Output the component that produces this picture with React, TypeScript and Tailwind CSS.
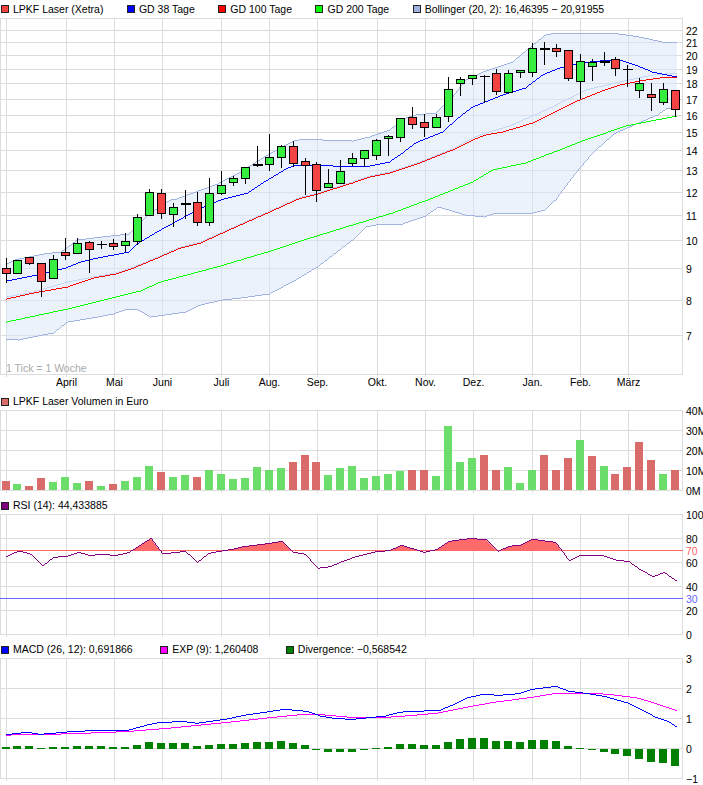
const GRID_X = [6, 66, 114, 162, 221, 269, 317, 377, 425, 473, 532, 580, 628];
const GRID = "#dcdcdc";
const RIGHT = 682.5;
const FONT = 10.5;

const xAt = (i: number) => Math.floor(6 + i * 11.96) + 0.5;

// wick top, body top, body bottom, wick bottom, kind (r/g body, d thin doji, t thick doji)
const candles: [number, number, number, number, string][] = [
  [258, 268, 273, 283, "r"], [260, 260, 273, 273, "g"], [257, 257, 263, 265, "r"], [263, 263, 281, 297, "r"],
  [255, 259, 278, 278, "g"], [238, 252, 255, 260, "r"], [238, 243, 253, 253, "g"], [241, 242, 249, 273, "r"],
  [241, 244, 244, 249, "d"], [239, 243, 246, 250, "r"], [233, 241, 245, 252, "g"], [214, 217, 241, 245, "g"],
  [189, 192, 215, 215, "g"], [189, 193, 213, 219, "r"], [203, 207, 214, 227, "g"], [190, 203, 203, 219, "t"],
  [192, 202, 222, 226, "r"], [178, 193, 222, 226, "g"], [171, 185, 193, 195, "g"], [176, 178, 182, 186, "g"],
  [167, 167, 178, 184, "g"], [146, 164, 164, 167, "t"], [134, 157, 164, 171, "g"], [145, 146, 157, 168, "g"],
  [141, 146, 163, 167, "r"], [158, 161, 165, 195, "r"], [162, 164, 190, 202, "r"], [169, 183, 187, 187, "g"],
  [160, 171, 183, 183, "g"], [153, 158, 163, 166, "g"], [150, 150, 158, 167, "g"], [139, 140, 155, 160, "g"],
  [135, 136, 138, 156, "g"], [118, 118, 137, 142, "g"], [107, 117, 124, 129, "r"], [114, 122, 127, 137, "r"],
  [114, 117, 127, 127, "g"], [77, 89, 116, 122, "g"], [77, 79, 83, 96, "g"], [75, 75, 78, 85, "g"],
  [75, 76, 76, 103, "d"], [69, 73, 91, 95, "r"], [70, 73, 92, 92, "g"], [70, 70, 72, 78, "g"],
  [43, 48, 72, 77, "g"], [42, 48, 48, 65, "t"], [44, 48, 51, 57, "r"], [50, 50, 78, 81, "r"],
  [54, 61, 81, 99, "g"], [59, 62, 66, 81, "g"], [52, 61, 61, 66, "t"], [57, 59, 68, 76, "r"],
  [65, 69, 69, 87, "d"], [78, 83, 90, 98, "g"], [83, 94, 97, 111, "r"], [83, 89, 102, 105, "g"],
  [90, 90, 109, 117, "r"],
];

const upper = "6,264 14,260 43,254 60,252 66,248 77,240 110,236 128,234 133,230 147,215 170,200 176,199 217,184 240,172 267,155 293,141 303,139 323,140 352,141 369,137 389,130 405,118 415,115 435,113 452,97 465,80 485,71 512,62 529,48 545,35 555,33 575,33 612,33 639,37 662,42 677,43";
const lower = "6,339 18,340 37,336 53,333 67,322 97,317 113,314 127,309 138,310 150,317 185,312 200,305 222,300 240,298 269,294 295,280 317,267 352,240 365,227 375,225 402,224 425,216 438,207 465,215 484,217 495,213 532,213 544,210 555,200 572,177 592,153 615,133 629,127 645,120 657,115 667,108 677,108";
const middle = "6,297 33,292 67,282 93,277 115,273 133,267 157,257 180,247 200,242 233,227 267,212 298,198 317,193 352,182 369,176 389,172 419,162 452,149 472,138 485,133 509,126 552,107 585,90 619,82 652,75 677,73";
const gd38 = "6,281 37,275 65,268 80,262 92,259 113,255 128,252 138,243 160,230 182,218 207,205 223,199 247,193 267,180 287,168 297,165 333,166 369,166 389,162 402,153 415,143 442,132 459,117 472,107 502,95 525,88 542,75 559,68 579,63 599,61 619,60 635,65 652,72 677,77";
const gd100 = "6,299 33,293 67,287 93,278 115,274 133,268 157,258 180,248 200,243 233,228 267,213 298,199 317,194 352,183 369,177 389,173 419,163 452,150 472,140 485,135 502,132 519,127 532,123 552,113 579,100 599,92 619,85 639,81 659,78 677,77";
const gd200 = "6,322 67,309 115,297 140,291 160,282 220,266 267,252 297,242 352,225 392,213 427,200 472,182 492,170 525,163 559,150 579,142 605,133 625,126 645,122 677,116";

const priceTicks: [string, number][] = [
  ["22", 30], ["21", 42], ["20", 55], ["19", 69], ["18", 83], ["17", 99], ["16", 115], ["15", 132],
  ["14", 150], ["13", 170], ["12", 192], ["11", 215], ["10", 240], ["9", 268], ["8", 300], ["7", 335],
];
const months: [string, number][] = [
  ["April", 66], ["Mai", 114], ["Juni", 162], ["Juli", 221], ["Aug.", 269], ["Sep.", 317], ["Okt.", 377],
  ["Nov.", 425], ["Dez.", 473], ["Jan.", 532], ["Feb.", 580], ["März", 628],
];

// volume bar tops, read off at 3x (baseline 285), negative = red
const volume = [
  -258, 267, -273, -249, 261, 246, 264, -258, 273, -267, 258, 246, 213, -231, 246, 240, -246, 225, 237, 252,
  249, 216, 225, 219, -201, -180, -201, 240, 219, 213, 249, 243, 237, 228, -225, -225, 243, 93, 201, 189,
  -180, -225, 216, 264, 225, -180, -225, -189, 135, -183, 213, -237, -216, -141, -195, 237, -225,
];

const divergence = [
  321, 318, 318, 324, 321, 321, 318, 318, 318, 321, 321, 315, 306, 309, 309, 309, 318, 315, 312, 312,
  309, 306, 306, 303, 309, 315, 330, 336, 336, 336, 330, 324, 321, 312, 312, 315, 315, 306, 297, 294,
  294, 303, 303, 306, 300, 300, 303, 318, 324, 330, 336, 342, 348, 357, 366, 369, 378,
];

const fromZoom = (pts: number[], x0: number, y0: number) => {
  const out: string[] = [];
  for (let i = 0; i < pts.length; i += 2) out.push(`${x0 + pts[i] / 3},${y0 + pts[i + 1] / 3}`);
  return out.join(" ");
};

const rsi =
  fromZoom([18, 170, 55, 153, 90, 162, 127, 198, 160, 172, 200, 169, 235, 157, 270, 167, 305, 162, 345, 167, 385, 158, 452, 115, 487, 162, 555, 154, 592, 187, 625, 160, 665, 153, 700, 147, 730, 140, 808, 130, 845, 124, 880, 157, 915, 163, 952, 205, 990, 200, 1030, 183, 1056, 175], 0, 500) +
  " " +
  fromZoom([0, 173, 70, 155, 110, 152, 148, 136, 215, 157, 255, 148, 290, 124, 350, 116, 400, 118, 437, 154, 470, 139, 505, 135, 540, 118, 610, 127, 650, 182, 685, 166, 750, 166, 790, 180, 830, 185, 865, 210, 903, 230, 935, 217, 975, 245], 352, 500);

const macd =
  fromZoom([18, 284, 80, 277, 120, 283, 200, 276, 290, 271, 385, 270, 440, 255, 470, 249, 545, 244, 590, 250, 680, 237, 730, 226, 800, 216, 850, 208, 920, 214, 960, 228, 1000, 235, 1050, 238], 0, 640) +
  " " +
  fromZoom([0, 238, 60, 232, 100, 228, 140, 217, 170, 214, 260, 212, 300, 195, 340, 175, 390, 163, 440, 166, 500, 161, 540, 148, 610, 139, 650, 154, 700, 160, 760, 170, 830, 190, 880, 215, 910, 232, 945, 243, 975, 262], 352, 640);

const exp =
  fromZoom([18, 286, 60, 283, 180, 282, 330, 277, 400, 273, 500, 265, 600, 255, 700, 245, 800, 234, 900, 224, 950, 223, 1050, 232], 0, 640) +
  " " +
  fromZoom([0, 232, 100, 232, 170, 227, 250, 220, 340, 202, 430, 186, 540, 172, 610, 160, 700, 159, 770, 163, 850, 173, 900, 187, 975, 212], 352, 640);

// the original chart draws aliased 1px lines, so walk column by column and fill whole pixels
function pixelPath(points: string) {
  const pts = points.split(" ").map((p) => p.split(",").map(Number));
  let d = "";
  let prev: number | null = null;
  for (let s = 0; s < pts.length - 1; s++) {
    const [x0, y0] = pts[s];
    const [x1, y1] = pts[s + 1];
    for (let x = Math.ceil(x0); x < x1; x++) {
      const y = Math.floor(y0 + ((x - x0) / (x1 - x0)) * (y1 - y0));
      let top = y;
      let bottom = y;
      if (prev !== null && y < prev - 1) bottom = prev - 1;
      if (prev !== null && y > prev + 1) top = prev + 1;
      d += `M${x} ${top}h1v${bottom - top + 1}h-1z`;
      prev = y;
    }
  }
  return d;
}

function Legend({ items, className }: { items: { color: string; label: string }[]; className: string }) {
  return (
    <div className={`flex items-center pl-[1px] text-[10.5px] leading-none text-black ${className}`}>
      {items.map((item) => (
        <div key={item.label} className="flex items-center gap-[4px] whitespace-nowrap">
          <span className="h-[8px] w-[8px] border border-[#222222]" style={{ backgroundColor: item.color }} />
          <span>{item.label}</span>
        </div>
      ))}
    </div>
  );
}

function Grid({ top, bottom, rows }: { top: number; bottom: number; rows: number[] }) {
  return (
    <g stroke={GRID} strokeWidth={1} shapeRendering="crispEdges">
      <line x1={0.5} x2={0.5} y1={top} y2={bottom} />
      <line x1={RIGHT} x2={RIGHT} y1={top} y2={bottom} />
      <line x1={0} x2={RIGHT} y1={top} y2={top} />
      <line x1={0} x2={RIGHT} y1={bottom} y2={bottom} />
      {rows.map((y) => (
        <line key={y} x1={0} x2={RIGHT} y1={y + 0.5} y2={y + 0.5} />
      ))}
      {GRID_X.map((x) => (
        <line key={x} x1={x + 0.5} x2={x + 0.5} y1={top} y2={bottom + 2} />
      ))}
    </g>
  );
}

function Ticks({ ticks }: { ticks: [string, number][] }) {
  return (
    <g fontSize={FONT} fill="#000000">
      {ticks.map(([label, y]) => (
        <text key={label} x={686} y={y + 5}>
          {label}
        </text>
      ))}
    </g>
  );
}

function Line({ points, color }: { points: string; color: string }) {
  return <path d={pixelPath(points)} fill={color} shapeRendering="crispEdges" />;
}

function Candle({ index }: { index: number }) {
  const [hi, top, bottom, lo, kind] = candles[index];
  const x = xAt(index);
  const doji = kind === "d" || kind === "t";
  return (
    <g shapeRendering="crispEdges">
      <line x1={x} x2={x} y1={hi} y2={lo} stroke="#000000" />
      {doji ? (
        <rect x={x - 5} y={top} width={10} height={kind === "t" ? 2 : 1} fill="#000000" />
      ) : (
        <rect
          x={x - 4}
          y={top + 0.5}
          width={8}
          height={bottom - top}
          fill={kind === "r" ? "#f24242" : "#36ee40"}
          stroke="#000000"
        />
      )}
    </g>
  );
}

function PriceChart() {
  return (
    <svg width={703} height={375} viewBox="0 18 703 375" className="block overflow-visible">
      <Grid top={18.5} bottom={374.5} rows={priceTicks.map(([, y]) => y)} />
      <polygon
        points={`${upper} ${lower.split(" ").reverse().join(" ")}`}
        fill="#d9e6f9"
        fillOpacity={0.5}
      />
      <Line points={upper} color="#a0b2e0" />
      <Line points={lower} color="#a0b2e0" />
      <Line points={middle} color="#c2d6f5" />
      <Line points={gd200} color="#00ff00" />
      <Line points={gd100} color="#ff0000" />
      <Line points={gd38} color="#0000ff" />
      {candles.map((_, i) => (
        <Candle key={i} index={i} />
      ))}
      <text x={6} y={372} fontSize={FONT} fill="#aaaaaa">
        1 Tick = 1 Woche
      </text>
      <Ticks ticks={priceTicks} />
      <g fontSize={FONT} fill="#000000" textAnchor="middle">
        {months.map(([label, x]) => (
          <text key={label} x={x + 0.5} y={386}>
            {label}
          </text>
        ))}
      </g>
    </svg>
  );
}

function VolumeChart() {
  return (
    <svg width={703} height={87} viewBox="0 410 703 87" className="block overflow-visible">
      <Grid top={410.5} bottom={490.5} rows={[430, 450, 470]} />
      {volume.map((v, i) => {
        const top = 395 + Math.abs(v) / 3;
        return (
          <rect
            key={i}
            x={xAt(i) - 4.5}
            y={top}
            width={8}
            height={490 - top}
            fill={v < 0 ? "#d96b6b" : "#6bdd6b"}
            shapeRendering="crispEdges"
          />
        );
      })}
      <Ticks ticks={[["40M", 410], ["30M", 430], ["20M", 450], ["10M", 470], ["0M", 490]]} />
    </svg>
  );
}

function RsiChart() {
  return (
    <svg width={703} height={127} viewBox="0 514 703 127" className="block overflow-visible">
      <defs>
        <clipPath id="over70">
          <rect x={0} y={514} width={682} height={36.5} />
        </clipPath>
      </defs>
      <Grid top={514.5} bottom={634.5} rows={[538, 562, 586, 610]} />
      <polygon points={`6,634 ${rsi} 676,634`} fill="#ff6b6b" clipPath="url(#over70)" />
      <line x1={0} x2={RIGHT} y1={550.5} y2={550.5} stroke="#ff6666" shapeRendering="crispEdges" />
      <line x1={0} x2={RIGHT} y1={598.5} y2={598.5} stroke="#6666ff" shapeRendering="crispEdges" />
      <Line points={rsi} color="#800080" />
      <Ticks ticks={[["100", 514], ["80", 538], ["60", 562], ["40", 586], ["20", 610], ["0", 634]]} />
      <text x={686} y={555} fontSize={FONT} fill="#ff6666">
        70
      </text>
      <text x={686} y={603} fontSize={FONT} fill="#6666ff">
        30
      </text>
    </svg>
  );
}

function MacdChart() {
  return (
    <svg width={703} height={127} viewBox="0 658 703 127" className="block overflow-visible">
      <Grid top={658.5} bottom={778.5} rows={[688, 718, 748]} />
      {divergence.map((v, i) => {
        const y = 640 + v / 3;
        const zero = 748.7;
        return (
          <rect
            key={i}
            x={xAt(i) - 4.5}
            y={Math.min(y, zero)}
            width={8}
            height={Math.max(Math.abs(y - zero), 1)}
            fill="#008000"
            shapeRendering="crispEdges"
          />
        );
      })}
      <Line points={exp} color="#ff00ff" />
      <Line points={macd} color="#0000ff" />
      <Ticks ticks={[["3", 658], ["2", 688], ["1", 718], ["0", 748], ["−1", 778]]} />
    </svg>
  );
}

export default function App() {
  return (
    <div className="h-[785px] w-[703px] overflow-hidden bg-white font-['Liberation_Sans',Arial,sans-serif]">
      <Legend
        className="h-[18px] gap-[23.5px]"
        items={[
          { color: "#f24242", label: "LPKF Laser (Xetra)" },
          { color: "#0000ff", label: "GD 38 Tage" },
          { color: "#ff0000", label: "GD 100 Tage" },
          { color: "#00ff00", label: "GD 200 Tage" },
          { color: "#a0b2e0", label: "Bollinger (20, 2): 16,46395 − 20,91955" },
        ]}
      />
      <PriceChart />
      <Legend className="h-[17px]" items={[{ color: "#d96b6b", label: "LPKF Laser Volumen in Euro" }]} />
      <VolumeChart />
      <Legend className="h-[17px]" items={[{ color: "#800080", label: "RSI (14): 44,433885" }]} />
      <RsiChart />
      <Legend
        className="h-[17px] gap-[27.5px]"
        items={[
          { color: "#0000ff", label: "MACD (26, 12): 0,691866" },
          { color: "#ff00ff", label: "EXP (9): 1,260408" },
          { color: "#008000", label: "Divergence: −0,568542" },
        ]}
      />
      <MacdChart />
    </div>
  );
}
